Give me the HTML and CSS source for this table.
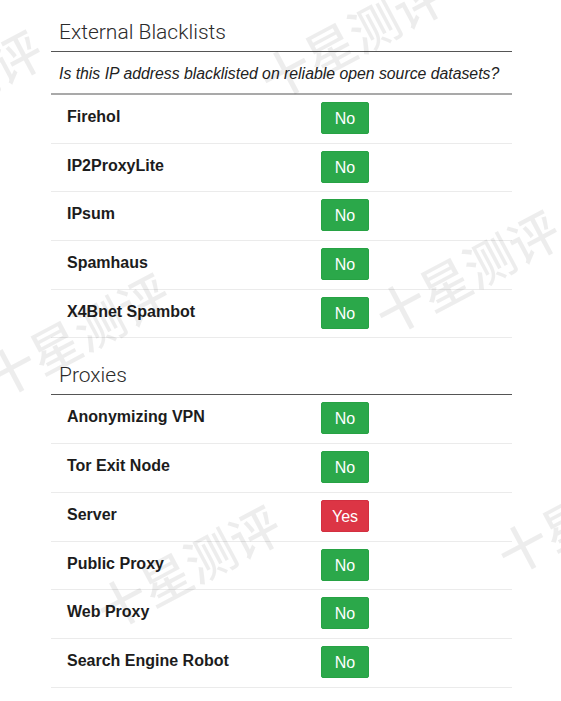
FILE: index.html
```html
<!DOCTYPE html>
<html lang="en">
<head>
<meta charset="utf-8">
<title>IP Check</title>
<link rel="stylesheet" href="styles.css">
</head>
<body>
<main class="page">
  <section class="section">
    <h2 class="section-title">External Blacklists</h2>
    <p class="section-desc">Is this IP address blacklisted on reliable open source datasets?</p>
    <div class="rows">
      <div class="row"><span class="label">Firehol</span><span class="badge no">No</span></div>
      <div class="row"><span class="label">IP2ProxyLite</span><span class="badge no">No</span></div>
      <div class="row"><span class="label">IPsum</span><span class="badge no">No</span></div>
      <div class="row"><span class="label">Spamhaus</span><span class="badge no">No</span></div>
      <div class="row"><span class="label">X4Bnet Spambot</span><span class="badge no">No</span></div>
    </div>
  </section>
  <section class="section section-next">
    <h2 class="section-title">Proxies</h2>
    <div class="rows">
      <div class="row"><span class="label">Anonymizing VPN</span><span class="badge no">No</span></div>
      <div class="row"><span class="label">Tor Exit Node</span><span class="badge no">No</span></div>
      <div class="row"><span class="label">Server</span><span class="badge yes">Yes</span></div>
      <div class="row"><span class="label">Public Proxy</span><span class="badge no">No</span></div>
      <div class="row"><span class="label">Web Proxy</span><span class="badge no">No</span></div>
      <div class="row"><span class="label">Search Engine Robot</span><span class="badge no">No</span></div>
    </div>
  </section>
</main>
<div class="watermarks" aria-hidden="true">
  <span class="wm wm-a">十星测评</span>
  <span class="wm wm-b">十星测评</span>
  <span class="wm wm-c">十星测评</span>
  <span class="wm wm-d">十星测评</span>
  <span class="wm wm-e">十星测评</span>
  <span class="wm wm-f">十星测评</span>
</div>
</body>
</html>
```
FILE: styles.css
```css
html, body {
  margin: 0;
  padding: 0;
  background: #ffffff;
}
body {
  font-family: "Liberation Sans", Arial, sans-serif;
  color: #212529;
  position: relative;
  overflow: hidden;
  min-height: 701px;
}
.page {
  width: 461px;
  margin-left: 51px;
}
.section-title {
  margin: 0;
  font-family: Roboto, "Liberation Sans", sans-serif;
  font-weight: 300;
  font-size: 21px;
  line-height: 26px;
  color: #2b2b2b;
  padding: 19px 8px 6px;
  border-bottom: 1px solid #555555;
}
.section-next {
  margin-top: 5px;
}
.section-desc {
  margin: 0;
  font-style: italic;
  font-size: 15.8px;
  line-height: 22px;
  color: #222222;
  padding: 11px 0 8px 8px;
  white-space: nowrap;
  border-bottom: 2px solid #a9a9a9;
}
.row {
  display: grid;
  grid-template-columns: 254px 1fr;
  align-items: start;
  height: 48.7px;
  box-sizing: border-box;
  padding-top: 7px;
  border-bottom: 1.5px solid #ebebeb;
}
.label {
  padding-left: 16px;
  padding-top: 3px;
  font-weight: 700;
  font-size: 16px;
  line-height: 24px;
  color: #1c1c1c;
}
.badge {
  justify-self: start;
  margin-left: 16px;
  width: 48px;
  height: 32px;
  box-sizing: border-box;
  display: flex;
  align-items: center;
  justify-content: center;
  color: #ffffff;
  font-size: 16px;
  font-weight: 500;
  border-radius: 2px;
  padding-top: 2px;
}
.badge.no {
  background: #2ba84a;
  border: 1px solid #27a244;
}
.badge.yes {
  background: #dc3545;
  border: 1px solid #d32f40;
}
.watermarks {
  position: absolute;
  inset: 0;
  pointer-events: none;
}
.wm {
  position: absolute;
  width: 240px;
  margin-left: -120px;
  margin-top: -28px;
  text-align: center;
  font-family: "Noto Sans CJK SC", sans-serif;
  font-size: 50px;
  line-height: 56px;
  font-weight: 500;
  color: rgba(0, 0, 0, 0.07);
  transform: rotate(-28deg);
  white-space: nowrap;
}
.wm-a { left: -51px; top: 90px; }
.wm-b { left: 351px; top: 35px; }
.wm-c { left: 76px; top: 333px; }
.wm-d { left: 466px; top: 270px; }
.wm-e { left: 187px; top: 565px; }
.wm-f { left: 588px; top: 510px; }
```
